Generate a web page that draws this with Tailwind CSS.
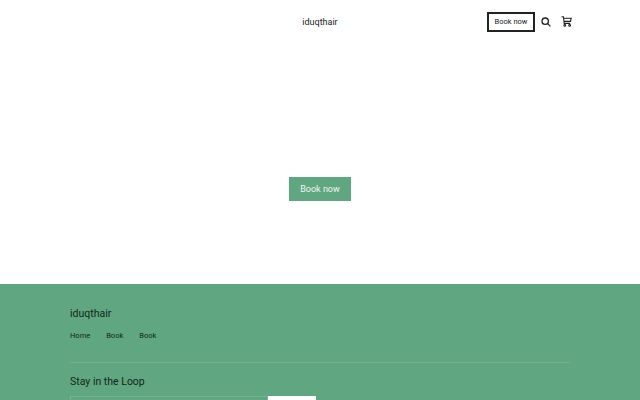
<!DOCTYPE html>
<html lang="en">
<head>
    <meta charset="UTF-8">
    <title>iduqthair</title>
    <script src="https://cdn.jsdelivr.net/npm/@tailwindcss/browser@4"></script>
</head>
<body class="h-[400px] overflow-hidden bg-white font-['Roboto',sans-serif] text-[#111]">
    <!-- header -->
    <header class="relative flex h-[43px] items-center justify-end pr-[66px]">
        <a href="#" class="absolute left-0 right-0 top-[15px] text-center text-[9px] leading-[14px] text-[#222]">iduqthair</a>
        <a href="#" class="mt-[1px] flex h-[20px] w-[48px] items-center justify-center border-2 border-[#222] text-[7.5px] text-[#222]">Book now</a>
        <button class="flex h-[24px] w-[22px] items-center justify-center">
            <svg width="10" height="10" viewBox="0 0 10 10" fill="none" stroke="#222" stroke-width="1.3"><circle cx="4.2" cy="4.2" r="3.2"/><path d="M6.6 6.6 9.4 9.4"/></svg>
        </button>
        <button class="ml-[1px] flex h-[24px] w-[16px] items-center justify-center">
            <svg width="11" height="11" viewBox="0 0 11 11" fill="none" stroke="#222" stroke-width="1.1"><path d="M0.5 0.8H2.4L3.2 7.4H9.2M2.6 2.2H10.2L9.4 5.4H3"/><circle cx="3.8" cy="9.4" r="0.9"/><circle cx="8.6" cy="9.4" r="0.9"/></svg>
        </button>
    </header>

    <!-- hero -->
    <section class="flex h-[241px] items-start justify-center pt-[134px]">
        <a href="#" class="flex h-[24px] w-[62px] items-center justify-center bg-[#60a680] pt-[2px] text-[9px] text-[#eef6f1]">Book now</a>
    </section>

    <!-- footer -->
    <footer class="h-[116px] bg-[#60a680] px-[70px] pt-[23px]">
        <div class="text-[10.5px] leading-[14px] text-[#10261a]">iduqthair</div>
        <nav class="mt-[9px] flex gap-[16px] text-[7.5px] leading-[12px] text-[#10261a]">
            <a href="#">Home</a>
            <a href="#">Book</a>
            <a href="#">Book</a>
        </nav>
        <div class="mt-[20px] border-t border-white/10"></div>
        <h2 class="mt-[12px] text-[10.5px] leading-[14px] text-[#10261a]">Stay in the Loop</h2>
        <div class="mt-[7px] flex">
            <div class="h-[20px] w-[198px] border border-white/15"></div>
            <div class="h-[20px] w-[48px] bg-white"></div>
        </div>
    </footer>
</body>
</html>
